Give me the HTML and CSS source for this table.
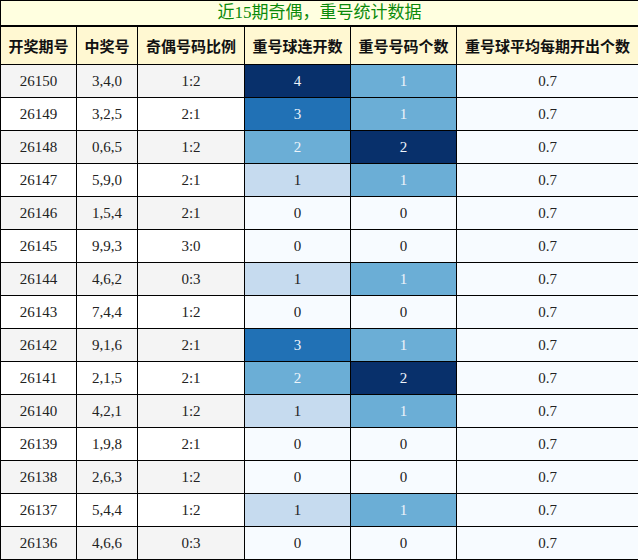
FILE: index.html
```html
<!DOCTYPE html>
<html lang="zh">
<head>
<meta charset="utf-8">
<link rel="stylesheet" href="styles.css">
</head>
<body>
<table class="stats">
  <colgroup>
    <col class="c1"><col class="c2"><col class="c3"><col class="c4"><col class="c5"><col class="c6">
  </colgroup>
  <thead>
    <tr class="title"><th colspan="6">近15期奇偶，重号统计数据</th></tr>
    <tr class="head">
      <th>开奖期号</th><th>中奖号</th><th>奇偶号码比例</th><th>重号球连开数</th><th>重号号码个数</th><th>重号球平均每期开出个数</th>
    </tr>
  </thead>
  <tbody>
    <tr class="odd"><td>26150</td><td>3,4,0</td><td>1:2</td><td class="h4">4</td><td class="h2">1</td><td class="h0">0.7</td></tr>
    <tr><td>26149</td><td>3,2,5</td><td>2:1</td><td class="h3">3</td><td class="h2">1</td><td class="h0">0.7</td></tr>
    <tr class="odd"><td>26148</td><td>0,6,5</td><td>1:2</td><td class="h2">2</td><td class="h4">2</td><td class="h0">0.7</td></tr>
    <tr><td>26147</td><td>5,9,0</td><td>2:1</td><td class="h1">1</td><td class="h2">1</td><td class="h0">0.7</td></tr>
    <tr class="odd"><td>26146</td><td>1,5,4</td><td>2:1</td><td class="h0">0</td><td class="h0">0</td><td class="h0">0.7</td></tr>
    <tr><td>26145</td><td>9,9,3</td><td>3:0</td><td class="h0">0</td><td class="h0">0</td><td class="h0">0.7</td></tr>
    <tr class="odd"><td>26144</td><td>4,6,2</td><td>0:3</td><td class="h1">1</td><td class="h2">1</td><td class="h0">0.7</td></tr>
    <tr><td>26143</td><td>7,4,4</td><td>1:2</td><td class="h0">0</td><td class="h0">0</td><td class="h0">0.7</td></tr>
    <tr class="odd"><td>26142</td><td>9,1,6</td><td>2:1</td><td class="h3">3</td><td class="h2">1</td><td class="h0">0.7</td></tr>
    <tr><td>26141</td><td>2,1,5</td><td>2:1</td><td class="h2">2</td><td class="h4">2</td><td class="h0">0.7</td></tr>
    <tr class="odd"><td>26140</td><td>4,2,1</td><td>1:2</td><td class="h1">1</td><td class="h2">1</td><td class="h0">0.7</td></tr>
    <tr><td>26139</td><td>1,9,8</td><td>2:1</td><td class="h0">0</td><td class="h0">0</td><td class="h0">0.7</td></tr>
    <tr class="odd"><td>26138</td><td>2,6,3</td><td>1:2</td><td class="h0">0</td><td class="h0">0</td><td class="h0">0.7</td></tr>
    <tr><td>26137</td><td>5,4,4</td><td>1:2</td><td class="h1">1</td><td class="h2">1</td><td class="h0">0.7</td></tr>
    <tr class="odd"><td>26136</td><td>4,6,6</td><td>0:3</td><td class="h0">0</td><td class="h0">0</td><td class="h0">0.7</td></tr>
  </tbody>
</table>
</body>
</html>
```
FILE: styles.css
```css
html, body {
  margin: 0;
  padding: 0;
  background: #ffffff;
}
.stats {
  border-collapse: collapse;
  table-layout: fixed;
  width: 638px;
  font-family: "Liberation Serif", "Noto Sans CJK SC", serif;
  font-size: 15px;
  color: #222222;
}
.c1 { width: 76px; }
.c2 { width: 61px; }
.c3 { width: 107px; }
.c4 { width: 106px; }
.c5 { width: 106px; }
.c6 { width: 182px; }
.stats th, .stats td {
  border: 1px solid #000000;
  padding: 0;
  text-align: center;
  overflow: hidden;
  white-space: nowrap;
}
.title th {
  height: 24px;
  background: #ffffe0;
  color: #0a8a0a;
  font-weight: normal;
  font-size: 17px;
  border-bottom: 2px solid #000000;
  line-height: 24px;
}
.head th {
  height: 37px;
  background: #fff8d2;
  font-family: "Noto Sans CJK SC", sans-serif;
  font-weight: bold;
  font-size: 15px;
  color: #111111;
}
.stats td {
  height: 32px;
  background: #ffffff;
}
.odd td {
  background: #f4f4f4;
}
.stats td.h0 { background: #f7fbff; color: #222222; }
.stats td.h1 { background: #c6dbef; color: #222222; }
.stats td.h2 { background: #6baed6; color: #eef4fa; }
.stats td.h3 { background: #2171b5; color: #eef4fa; }
.stats td.h4 { background: #08306b; color: #eef4fa; }
```
